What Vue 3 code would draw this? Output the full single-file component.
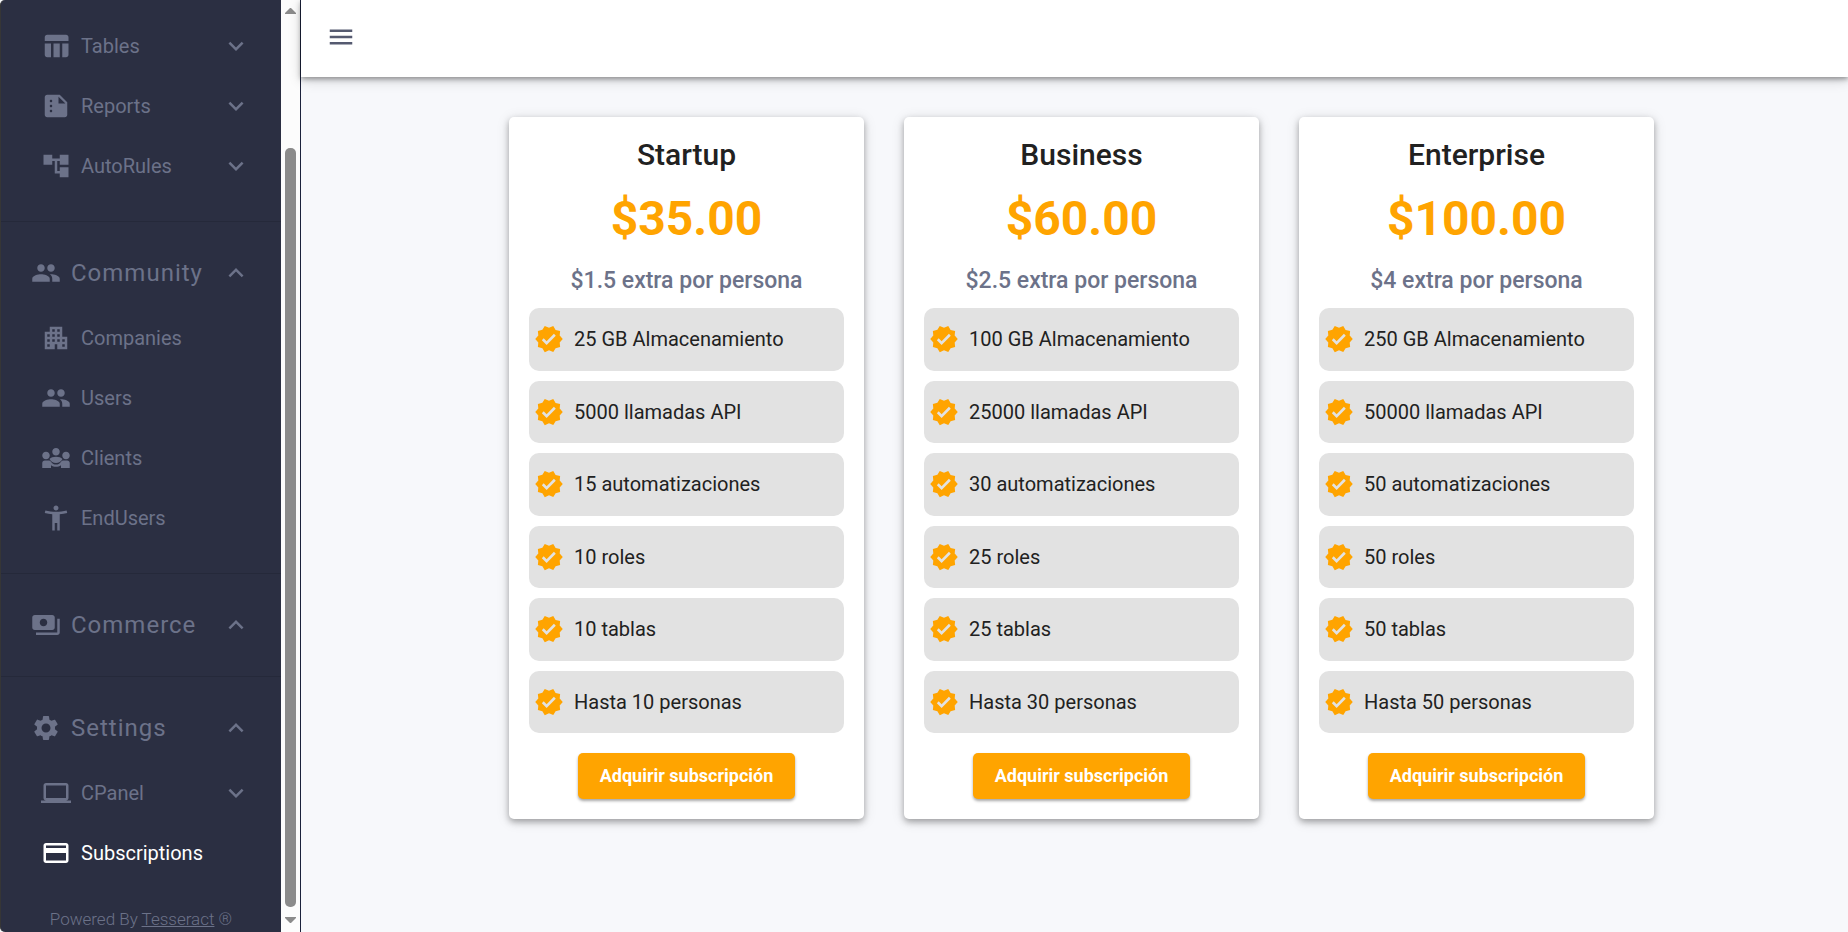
<template>
  <div class="layout">
    <aside class="sidebar">
      <nav class="sidebar-nav">
        <section v-for="section in sections" :key="section.key" class="nav-section">
          <button v-if="section.label" type="button" class="nav-title">
            <svg class="icon" viewBox="0 0 24 24"><path :d="icons[section.icon]" /></svg>
            <span class="nav-label">{{ section.label }}</span>
            <svg class="icon" viewBox="0 0 24 24"><path :d="icons.expandLess" /></svg>
          </button>
          <ul v-if="section.items.length" class="nav-list">
            <li v-for="item in section.items" :key="item.label">
              <a href="#" class="nav-item" :class="{ active: item.active }" @click.prevent>
                <svg class="icon" viewBox="0 0 24 24"><path :d="icons[item.icon]" /></svg>
                <span class="nav-label">{{ item.label }}</span>
                <svg v-if="item.expandable" class="icon" viewBox="0 0 24 24"><path :d="icons.expandMore" /></svg>
              </a>
            </li>
          </ul>
        </section>
      </nav>
      <footer class="sidebar-footer">Powered By <a href="#">Tesseract</a> ®</footer>
    </aside>

    <!-- scroll track -->
    <div class="scrollbar" aria-hidden="true">
      <svg class="scroll-arrow" viewBox="0 0 11 6"><path d="M5 0h1l5 5v1H0V5z" /></svg>
      <div class="scroll-track">
        <div class="scroll-thumb"></div>
      </div>
      <svg class="scroll-arrow" viewBox="0 0 11 6"><path d="M0 0h11v1L6 6H5L0 1z" /></svg>
    </div>

    <div class="content">
      <header class="topbar">
        <button type="button" class="menu-btn" aria-label="Menu">
          <svg class="icon" viewBox="0 0 24 24"><path :d="icons.menu" /></svg>
        </button>
      </header>
      <main class="plans">
        <article v-for="plan in plans" :key="plan.name" class="plan-card">
          <h2 class="plan-name">{{ plan.name }}</h2>
          <p class="plan-price">{{ plan.price }}</p>
          <p class="plan-extra">{{ plan.extra }} extra por persona</p>
          <ul class="plan-features">
            <li v-for="feature in plan.features" :key="feature" class="plan-feature">
              <svg class="icon" viewBox="0 0 24 24"><path :d="icons.verified" /></svg>
              <span>{{ feature }}</span>
            </li>
          </ul>
          <button type="button" class="plan-btn">Adquirir subscripción</button>
        </article>
      </main>
    </div>
  </div>
</template>

<script setup>
const icons = {
  table: 'M10 10.02h5V21h-5V10.02zM17 21h3c1.1 0 2-.9 2-2v-9h-5v11zm3-18H5c-1.1 0-2 .9-2 2v3h19V5c0-1.1-.9-2-2-2zM3 19c0 1.1.9 2 2 2h3V10H3v9z',
  report: 'M15 3H5c-1.1 0-2 .9-2 2v14c0 1.1.9 2 2 2h14c1.1 0 2-.9 2-2V9l-6-6zM8 17c-.55 0-1-.45-1-1s.45-1 1-1 1 .45 1 1-.45 1-1 1zm0-4c-.55 0-1-.45-1-1s.45-1 1-1 1 .45 1 1-.45 1-1 1zm0-4c-.55 0-1-.45-1-1s.45-1 1-1 1 .45 1 1-.45 1-1 1zm6 1V4.5l5.5 5.5H14z',
  tree: 'M22 11V3h-7v3H9V3H2v8h7V8h2v10h4v3h7v-8h-7v3h-2V8h2v3z',
  people: 'M16 11c1.66 0 2.99-1.34 2.99-3S17.66 5 16 5c-1.66 0-3 1.34-3 3s1.34 3 3 3zm-8 0c1.66 0 2.99-1.34 2.99-3S9.66 5 8 5C6.34 5 5 6.34 5 8s1.34 3 3 3zm0 2c-2.33 0-7 1.17-7 3.5V19h14v-2.5c0-2.33-4.67-3.5-7-3.5zm8 0c-.29 0-.62.02-.97.05 1.16.84 1.97 1.97 1.97 3.45V19h6v-2.5c0-2.33-4.67-3.5-7-3.5z',
  building: 'M17 11V3H7v4H3v14h8v-4h2v4h8V11h-4zM7 19H5v-2h2v2zm0-4H5v-2h2v2zm0-4H5V9h2v2zm4 4H9v-2h2v2zm0-4H9V9h2v2zm0-4H9V5h2v2zm4 8h-2v-2h2v2zm0-4h-2V9h2v2zm0-4h-2V5h2v2zm4 12h-2v-2h2v2zm0-4h-2v-2h2v2z',
  clients: 'M4 13c1.66 0 3-1.34 3-3S5.66 7 4 7s-3 1.34-3 3 1.34 3 3 3zM20 13c1.66 0 3-1.34 3-3s-1.34-3-3-3-3 1.34-3 3 1.34 3 3 3zM12 10c1.66 0 3-1.34 3-3s-1.34-3-3-3-3 1.34-3 3 1.34 3 3 3zM6.8 12.8C7.9 11.6 9.8 11 12 11s4.1.6 5.2 1.8C16 14.9 14.3 16 12 16s-4-1.1-5.2-3.2zM1 20v-4c0-1.1.9-2 2-2h3.3c.7 0 1.3.35 1.7.9 1 1.5 2.4 2.3 4 2.3s3-.8 4-2.3c.4-.55 1-.9 1.7-.9H21c1.1 0 2 .9 2 2v4h-7v-2.3c-1.2.8-2.5 1.3-4 1.3s-2.8-.5-4-1.3V20z',
  person: 'M20.5 6c-2.61.7-5.67 1-8.5 1s-5.89-.3-8.5-1L3 8c1.86.5 4 .83 6 1v13h2v-6h2v6h2V9c2-.17 4.14-.5 6-1l-.5-2zM12 6c1.1 0 2-.9 2-2s-.9-2-2-2-2 .9-2 2 .9 2 2 2z',
  payments: 'M19 14V6c0-1.1-.9-2-2-2H3c-1.1 0-2 .9-2 2v8c0 1.1.9 2 2 2h14c1.1 0 2-.9 2-2zm-9-1c-1.66 0-3-1.34-3-3s1.34-3 3-3 3 1.34 3 3-1.34 3-3 3zm13-6v11c0 1.1-.9 2-2 2H4v-2h17V7h2z',
  settings: 'M19.14 12.94c.04-.3.06-.61.06-.94 0-.32-.02-.64-.07-.94l2.03-1.58c.18-.14.23-.41.12-.61l-1.92-3.32c-.12-.22-.37-.29-.59-.22l-2.39.96c-.5-.38-1.03-.7-1.62-.94l-.36-2.54c-.04-.24-.24-.41-.48-.41h-3.84c-.24 0-.43.17-.47.41l-.36 2.54c-.59.24-1.13.57-1.62.94l-2.39-.96c-.22-.08-.47 0-.59.22L2.74 8.87c-.12.21-.08.47.12.61l2.03 1.58c-.05.3-.09.63-.09.94s.02.64.07.94l-2.03 1.58c-.18.14-.23.41-.12.61l1.92 3.32c.12.22.37.29.59.22l2.39-.96c.5.38 1.03.7 1.62.94l.36 2.54c.05.24.24.41.48.41h3.84c.24 0 .44-.17.47-.41l.36-2.54c.59-.24 1.13-.56 1.62-.94l2.39.96c.22.08.47 0 .59-.22l1.92-3.32c.12-.22.07-.47-.12-.61l-2.01-1.58zM12 15.6c-1.98 0-3.6-1.62-3.6-3.6s1.62-3.6 3.6-3.6 3.6 1.62 3.6 3.6-1.62 3.6-3.6 3.6z',
  laptop: 'M20 18c1.1 0 2-.9 2-2V6c0-1.1-.9-2-2-2H4c-1.1 0-2 .9-2 2v10c0 1.1.9 2 2 2H0v2h24v-2h-4zM4 6h16v10H4V6z',
  card: 'M20 4H4c-1.11 0-2 .89-2 2v12c0 1.11.89 2 2 2h16c1.11 0 2-.89 2-2V6c0-1.11-.89-2-2-2zm0 14H4v-6h16v6zm0-10H4V6h16v2z',
  verified: 'M23 12l-2.44-2.79.34-3.69-3.61-.82-1.89-3.2L12 2.96 8.6 1.5 6.71 4.69 3.1 5.5l.34 3.7L1 12l2.44 2.79-.34 3.7 3.61.82L8.6 22.5l3.4-1.47 3.4 1.46 1.89-3.19 3.61-.82-.34-3.69L23 12zm-12.91 4.72l-3.8-3.81 1.48-1.48 2.32 2.33 5.85-5.87 1.48 1.48-7.33 7.35z',
  expandMore: 'M16.59 8.59L12 13.17 7.41 8.59 6 10l6 6 6-6z',
  expandLess: 'M12 8l-6 6 1.41 1.41L12 10.83l4.59 4.58L18 14z',
  menu: 'M3 18h18v-2H3v2zm0-5h18v-2H3v2zm0-7v2h18V6H3z'
}

const sections = [
  {
    key: 'data',
    items: [
      { label: 'Tables', icon: 'table', expandable: true },
      { label: 'Reports', icon: 'report', expandable: true },
      { label: 'AutoRules', icon: 'tree', expandable: true }
    ]
  },
  {
    key: 'community',
    label: 'Community',
    icon: 'people',
    items: [
      { label: 'Companies', icon: 'building' },
      { label: 'Users', icon: 'people' },
      { label: 'Clients', icon: 'clients' },
      { label: 'EndUsers', icon: 'person' }
    ]
  },
  { key: 'commerce', label: 'Commerce', icon: 'payments', items: [] },
  {
    key: 'settings',
    label: 'Settings',
    icon: 'settings',
    items: [
      { label: 'CPanel', icon: 'laptop', expandable: true },
      { label: 'Subscriptions', icon: 'card', active: true }
    ]
  }
]

const plans = [
  {
    name: 'Startup',
    price: '$35.00',
    extra: '$1.5',
    features: ['25 GB Almacenamiento', '5000 llamadas API', '15 automatizaciones', '10 roles', '10 tablas', 'Hasta 10 personas']
  },
  {
    name: 'Business',
    price: '$60.00',
    extra: '$2.5',
    features: ['100 GB Almacenamiento', '25000 llamadas API', '30 automatizaciones', '25 roles', '25 tablas', 'Hasta 30 personas']
  },
  {
    name: 'Enterprise',
    price: '$100.00',
    extra: '$4',
    features: ['250 GB Almacenamiento', '50000 llamadas API', '50 automatizaciones', '50 roles', '50 tablas', 'Hasta 50 personas']
  }
]
</script>

<style>
body {
  margin: 0;
  background: #f7f8fb;
}
</style>

<style scoped>
.layout {
  display: flex;
  height: 100vh;
  overflow: hidden;
  font-family: Roboto, "Liberation Sans", sans-serif;
  font-size: 20px;
  color: #212121;
}

button {
  font-family: inherit;
  border: none;
  cursor: pointer;
}

ul {
  margin: 0;
  padding: 0;
  list-style: none;
}

.icon {
  flex: none;
  width: 30px;
  height: 30px;
  fill: currentColor;
}

/* sidebar */
.sidebar {
  box-sizing: border-box;
  flex: none;
  width: 281px;
  padding-top: 16px;
  overflow: hidden;
  border-left: 1px solid #363636;
  border-radius: 5px 0 0 5px;
  background: #2b2f42;
  color: #6c7289;
}

.nav-section {
  padding-bottom: 25px;
}

.nav-section + .nav-section {
  padding-top: 25px;
  border-top: 1px solid #25293a;
}

.nav-section:last-child {
  padding-bottom: 20px;
}

.nav-title,
.nav-item {
  display: flex;
  align-items: center;
  box-sizing: border-box;
  width: 100%;
  gap: 10px;
  padding-right: 30px;
  color: inherit;
}

.nav-title {
  height: 52px;
  padding-left: 30px;
  background: transparent;
  font-size: 24px;
  letter-spacing: 1px;
  text-align: left;
}

.nav-title + .nav-list {
  margin-top: 9px;
}

.nav-item {
  height: 60px;
  padding-left: 40px;
  text-decoration: none;
}

.nav-item.active {
  color: #fff;
}

.nav-label {
  flex: 1;
}

.sidebar-footer {
  font-size: 17px;
  font-weight: 300;
  line-height: 32px;
  text-align: center;
}

.sidebar-footer a {
  color: inherit;
}

/* scroll track */
.scrollbar {
  display: flex;
  flex: none;
  flex-direction: column;
  align-items: center;
  gap: 10px;
  box-sizing: border-box;
  width: 20px;
  padding: 8px 0 9px;
  border-right: 1px solid #1b213b;
  background: #fcfcfc;
}

.scroll-arrow {
  flex: none;
  width: 11px;
  height: 6px;
  fill: #8b8b8b;
}

.scroll-track {
  display: flex;
  flex: 1;
  flex-direction: column;
  justify-content: flex-end;
}

.scroll-thumb {
  width: 11px;
  height: 86%;
  border-radius: 5px;
  background: #8b8b8b;
}

/* content */
.content {
  flex: 1;
  min-width: 0;
}

.topbar {
  display: flex;
  align-items: center;
  box-sizing: border-box;
  height: 77px;
  padding: 0 25px 4px;
  background: #fff;
  box-shadow: 0 2px 5px rgba(0, 0, 0, 0.35), 0 3px 12px rgba(0, 0, 0, 0.18);
}

.menu-btn {
  display: flex;
  padding: 0;
  background: transparent;
  color: #555a70;
}

.plans {
  display: flex;
  justify-content: center;
  gap: 40px;
  padding: 40px 0 40px 14px;
}

.plan-card {
  display: flex;
  flex-direction: column;
  align-items: center;
  box-sizing: border-box;
  width: 355px;
  padding: 20px;
  border-radius: 5px;
  background: #fff;
  box-shadow: 0 3px 6px rgba(0, 0, 0, 0.3), 0 2px 14px rgba(0, 0, 0, 0.12);
}

.plan-name,
.plan-price,
.plan-extra {
  margin: 0;
}

.plan-name {
  font-size: 30px;
  font-weight: 500;
  line-height: 36px;
}

.plan-price {
  padding: 17px 0 16px;
  color: #ffa400;
  font-size: 48px;
  font-weight: 700;
  line-height: 58px;
}

.plan-extra {
  color: #6c7289;
  font-size: 23px;
  font-weight: 500;
  line-height: 34px;
}

.plan-features {
  display: grid;
  grid-auto-rows: 1fr;
  gap: 10px;
  width: 100%;
  height: 425px;
  margin: 10px 0 20px;
}

.plan-feature {
  display: flex;
  align-items: center;
  gap: 10px;
  padding: 0 5px;
  border-radius: 10px;
  background: #e2e2e2;
}

.plan-feature .icon {
  color: #ffa400;
}

.plan-btn {
  height: 46px;
  padding: 0 22px 2px;
  border-radius: 5px;
  background: #ffa400;
  box-shadow: 0 2px 3px rgba(0, 0, 0, 0.35);
  color: #fff;
  font-size: 18px;
  font-weight: 700;
}
</style>
